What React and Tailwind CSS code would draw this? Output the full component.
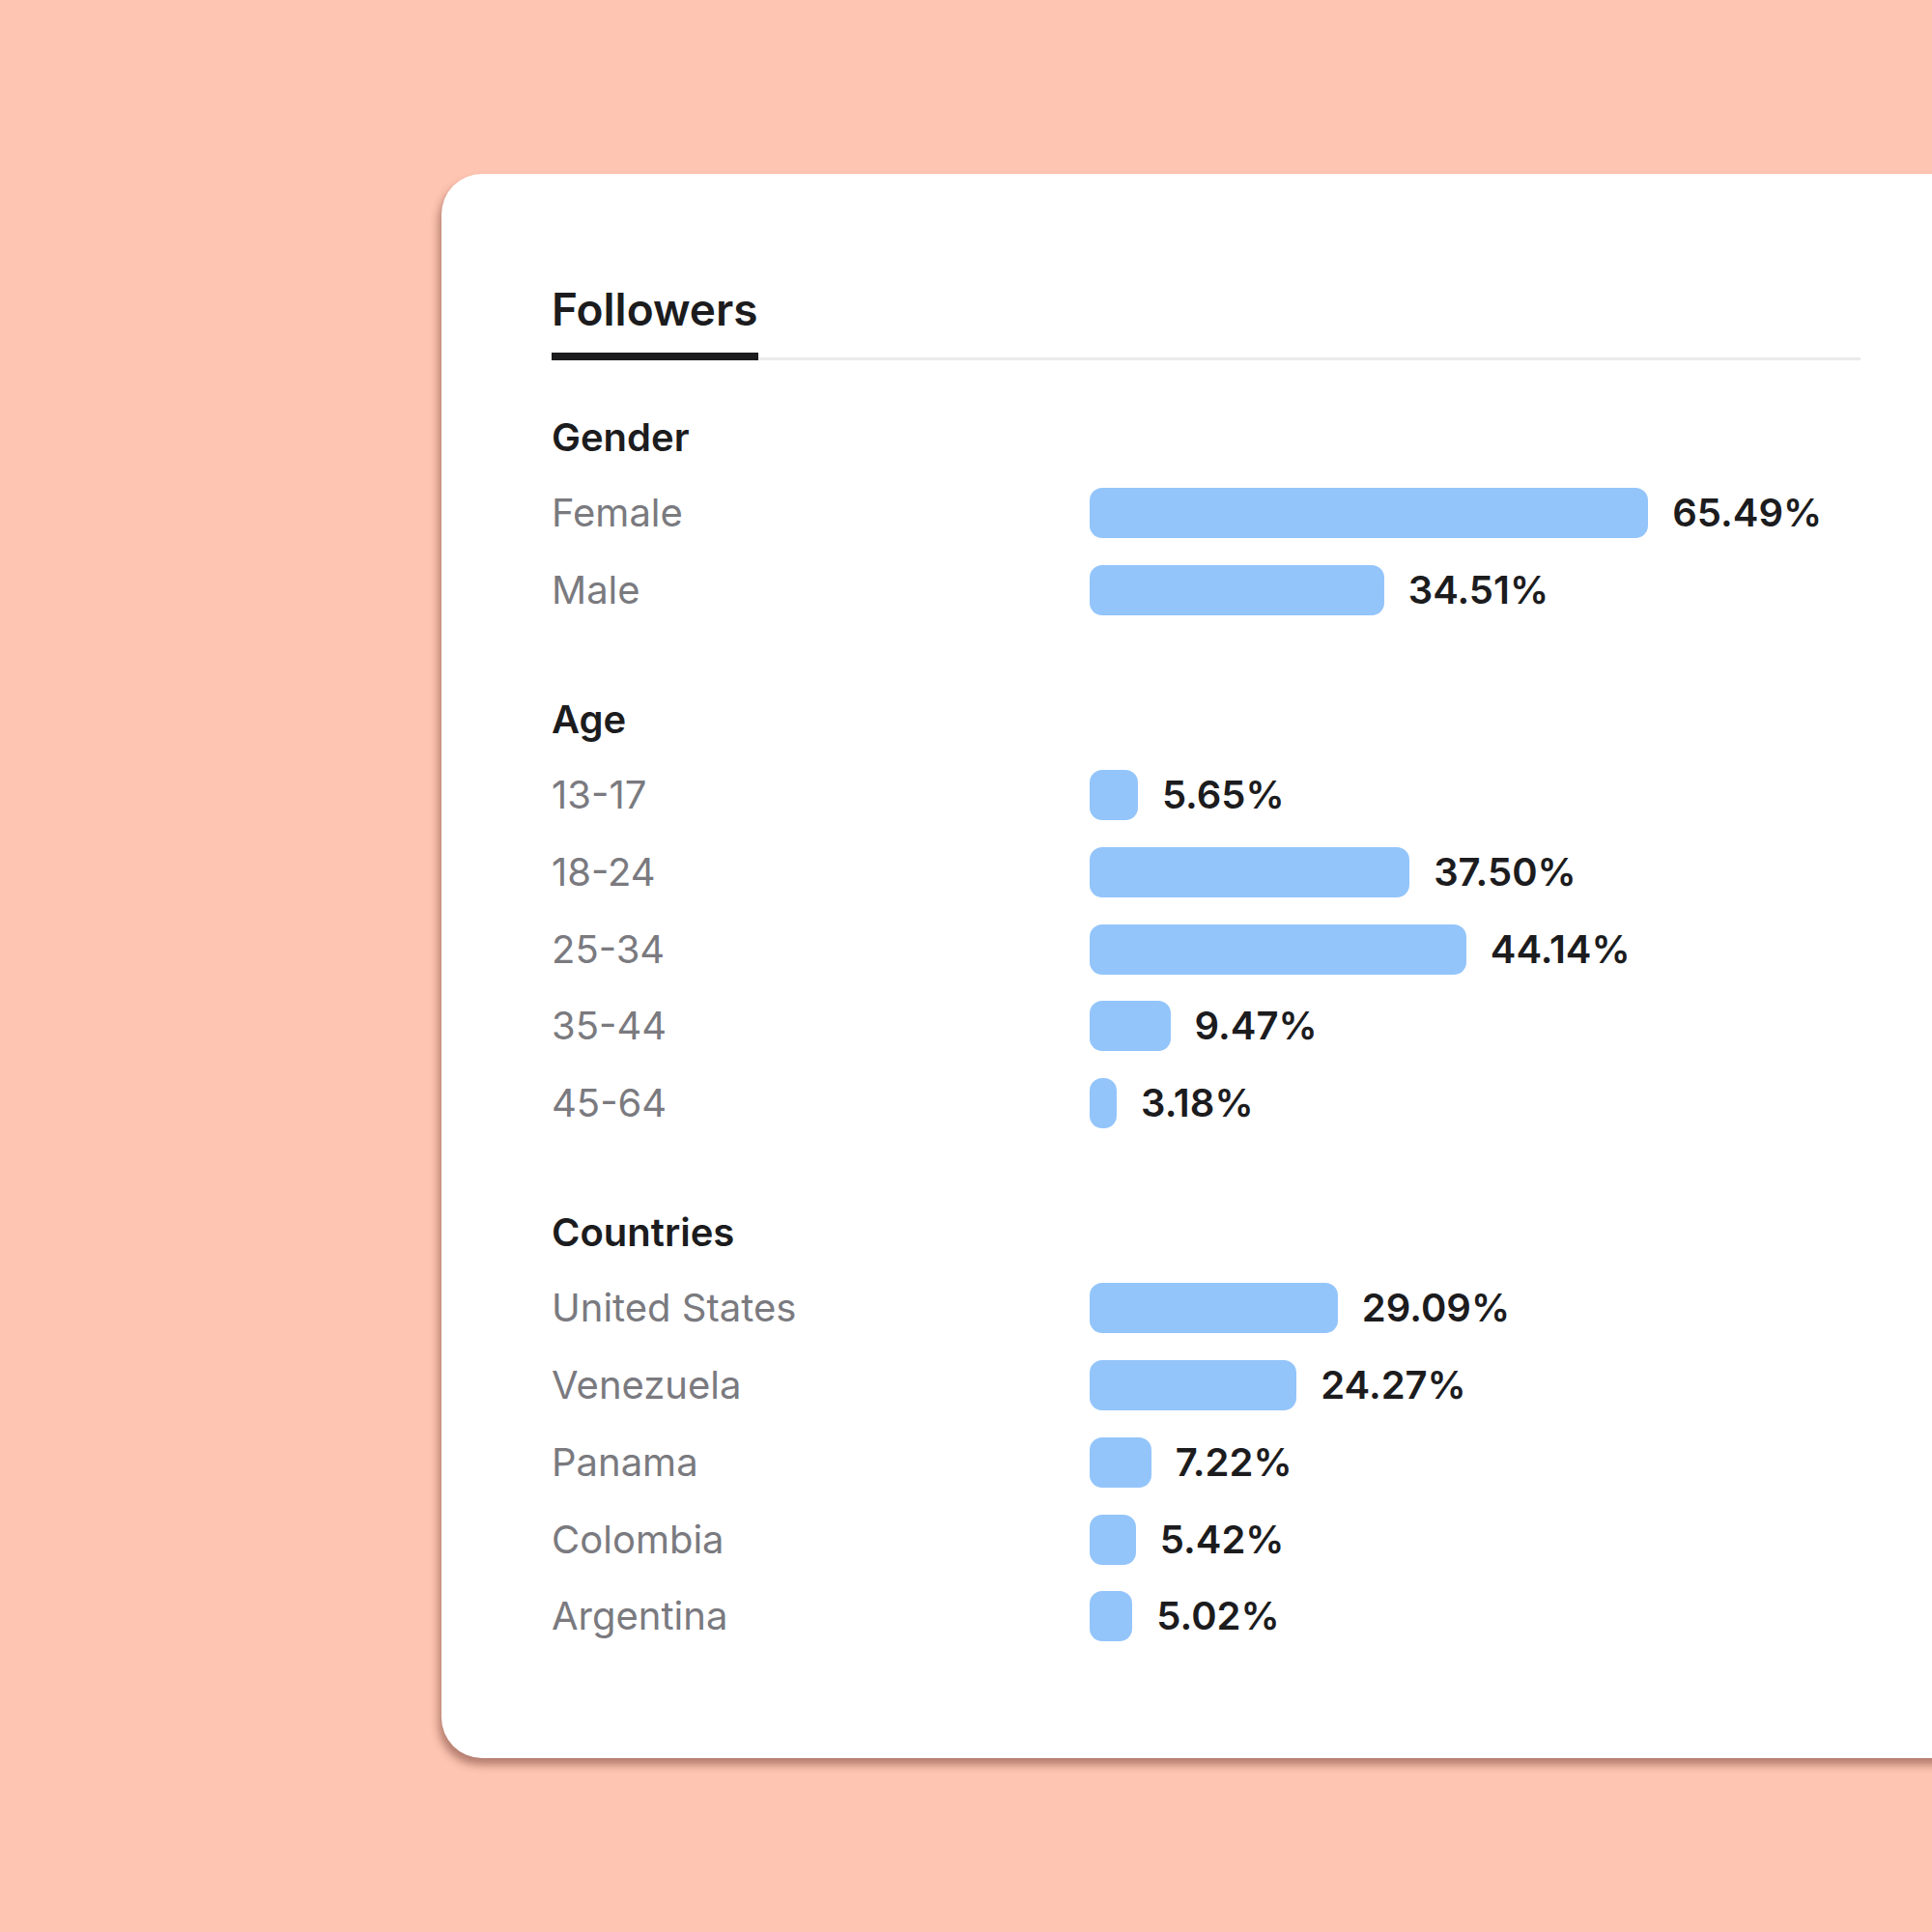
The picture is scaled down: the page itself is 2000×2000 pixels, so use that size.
import React from "react";

const sections = [
  {
    title: "Gender",
    rows: [
      ["Female", 65.49],
      ["Male", 34.51],
    ],
  },
  {
    title: "Age",
    rows: [
      ["13-17", 5.65],
      ["18-24", 37.5],
      ["25-34", 44.14],
      ["35-44", 9.47],
      ["45-64", 3.18],
    ],
  },
  {
    title: "Countries",
    rows: [
      ["United States", 29.09],
      ["Venezuela", 24.27],
      ["Panama", 7.22],
      ["Colombia", 5.42],
      ["Argentina", 5.02],
    ],
  },
];

function Row({ label, pct }) {
  return (
    <div className="flex h-[52px] items-center">
      <div className="w-[557px] text-[40px] leading-[52px] text-[#7a7a7f]">{label}</div>
      <div className="flex items-center">
        <div
          className="h-[52px] rounded-[13px] bg-[#93c5fb]"
          style={{ width: `${pct * 8.83}px` }}
        />
        <div className="ml-[25px] text-[40px] font-semibold leading-[52px] text-[#1c1c1e]">
          {pct.toFixed(2)}%
        </div>
      </div>
    </div>
  );
}

export default function App() {
  return (
    <div
      className="h-[2000px] w-[2000px] overflow-hidden bg-[#fec5b2] pl-[457px] pt-[180px]"
      style={{ fontFamily: "Inter, 'Noto Sans', sans-serif" }}
    >
      <div className="h-[1640px] w-[1700px] rounded-[42px] bg-white pl-[114px] pt-[112px] shadow-[-3px_7px_8px_rgba(90,40,30,0.45)]">
        <div className="flex w-[1355px] items-end">
          <div className="border-b-8 border-[#1c1c1e] pb-[17px] text-[46px] font-semibold leading-[56px] text-[#1c1c1e]">
            Followers
          </div>
          <div className="flex-1 border-b-[3px] border-[#ebebeb]" />
        </div>
        <div className="mt-[54px] flex flex-col gap-[82.5px]">
          {sections.map((s) => (
            <div key={s.title} className="flex flex-col">
              <div className="flex h-[52px] items-center text-[40px] font-semibold text-[#1c1c1e]">
                {s.title}
              </div>
              <div className="mt-[26px] flex flex-col gap-[27.7px]">
                {s.rows.map(([label, pct]) => (
                  <Row key={label} label={label} pct={pct} />
                ))}
              </div>
            </div>
          ))}
        </div>
      </div>
    </div>
  );
}
